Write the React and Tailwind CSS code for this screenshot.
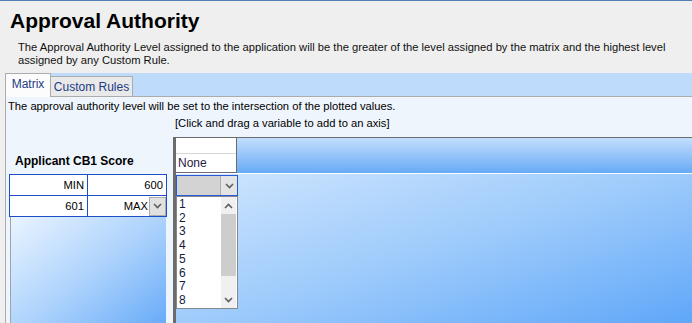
import { useState } from 'react';

const Chevron = ({ up = false, className = '' }) => (
  <svg width="9" height="6" viewBox="0 0 9 6" className={className}>
    <polyline
      points={up ? '1,5 4.5,1.5 8,5' : '1,1 4.5,4.5 8,1'}
      fill="none"
      stroke="#5f5f5f"
      strokeWidth="1.6"
    />
  </svg>
);

const ListBox = () => {
  const items = ['1', '2', '3', '4', '5', '6', '7', '8'];
  return (
    <div className="flex h-[113px] w-[62px] border border-[#828790] bg-white">
      <div className="flex-1 pl-[2px] pt-[1px]">
        {items.map((it) => (
          <div key={it} className="text-[12px] leading-[13.7px] text-[#141c3c]">
            {it}
          </div>
        ))}
      </div>
      {/* scrollbar */}
      <div className="mr-[1px] flex w-[15px] flex-col bg-[#f0f0f0]">
        <div className="flex h-[17px] items-center justify-center">
          <Chevron up />
        </div>
        <div className="h-[62px] bg-[#cdcdcd]" />
        <div className="flex-1" />
        <div className="flex h-[17px] items-center justify-center">
          <Chevron />
        </div>
      </div>
    </div>
  );
};

export default function App() {
  const [tab, setTab] = useState('matrix');

  return (
    <div className="flex h-[323px] w-[692px] overflow-hidden border-t border-[#4f7fb3] bg-[#efefef] font-['Liberation_Sans',Arial,sans-serif] text-[11.2px] text-black">
      {/* window edge */}
      <div className="w-[5px] shrink-0" />
      <div className="min-w-0 flex-1">
        <h1 className="pl-[5px] pt-[7px] text-[21px] font-bold leading-[26px]">Approval Authority</h1>
        <p className="w-[670px] pl-[13px] pt-[7px] leading-[13px] text-[#111]">
          The Approval Authority Level assigned to the application will be the greater of the level assigned by the matrix and the highest level assigned by any Custom Rule.
        </p>

        {/* Tabs */}
        <div className="mt-[6px] flex h-[23px] items-end bg-[#bfdbfb]">
          <button
            onClick={() => setTab('matrix')}
            className="relative z-10 -mb-px h-[24px] w-[46px] border border-b-0 border-[#acacac] bg-[#fcfcfc] pb-[3px] text-[12px] text-[#1d3b86]"
          >
            Matrix
          </button>
          <button
            onClick={() => setTab('rules')}
            className="h-[20px] w-[82px] border border-b-0 border-l-0 border-[#acacac] bg-[#e9e9e9] text-[12px] text-[#1d3b86]"
          >
            Custom Rules
          </button>
        </div>

        {/* Tab page */}
        <div className="h-[300px] border-l border-t border-[#acacac] bg-[#eef5fd]">
          <div className="pl-[2px] pt-[3px] leading-[13px]">
            The approval authority level will be set to the intersection of the plotted values.
          </div>
          <div className="pl-[169px] pt-[4px] leading-[13px]">[Click and drag a variable to add to an axis]</div>

          <div className="mt-[7px] flex">
            {/* Row axis */}
            <div className="w-[167px] shrink-0 pl-[3px]">
              <div className="h-[37px] pl-[6px] pt-[17px] text-[12px] font-bold leading-[14px]">Applicant CB1 Score</div>
              <div className="w-[158px] border border-[#1c4fc3] bg-white">
                <div className="flex h-[21px] border-b border-[#1c4fc3]">
                  <div className="flex w-[78px] items-center justify-end border-r border-[#1c4fc3] pr-[3px]">MIN</div>
                  <div className="flex flex-1 items-center justify-end pr-[3px]">600</div>
                </div>
                <div className="flex h-[20px]">
                  <div className="flex w-[78px] items-center justify-end border-r border-[#1c4fc3] pr-[3px]">601</div>
                  <div className="flex flex-1 items-center justify-end">
                    <span className="pr-[1px]">MAX</span>
                    <div className="flex h-[19px] w-[17px] items-center justify-center border border-[#adadad] bg-[#e1e1e1]">
                      <Chevron />
                    </div>
                  </div>
                </div>
              </div>
              <div className="ml-[1px] h-[120px] w-[156px] border-l border-[#9aa4b0] bg-linear-to-br from-[#eaf4ff] via-[#acd2fc] to-[#5fa6f7]" />
            </div>

            {/* Column axis + body */}
            <div className="flex-1 border-l-[3px] border-t border-[#6b6b6b]">
              <div className="flex h-[35px]">
                <div className="w-[61px] border-b border-r border-[#6b6b6b] bg-white">
                  <div className="h-[16px] border-b border-[#d6d6d6]" />
                  <div className="pl-[2px] pt-[3px] text-[12px] leading-[13px] text-[#2a1a40]">None</div>
                </div>
                <div className="flex-1 bg-linear-to-b from-[#c2defd] to-[#66aaf5]" />
              </div>
              <div className="h-px bg-white" />
              <div className="h-[160px] bg-linear-to-br from-[#d0e6fe] via-[#9ccafb] to-[#5aa4f8] pt-px">
                <div className="flex h-[21px] w-[62px] border border-[#2a5bd7] bg-[#d3d3d3]">
                  <div className="flex-1" />
                  <div className="flex w-[17px] items-center justify-center border-l border-[#adadad] bg-[#e4e4e4]">
                    <Chevron />
                  </div>
                </div>
                <ListBox />
              </div>
            </div>
          </div>
        </div>
      </div>
    </div>
  );
}
